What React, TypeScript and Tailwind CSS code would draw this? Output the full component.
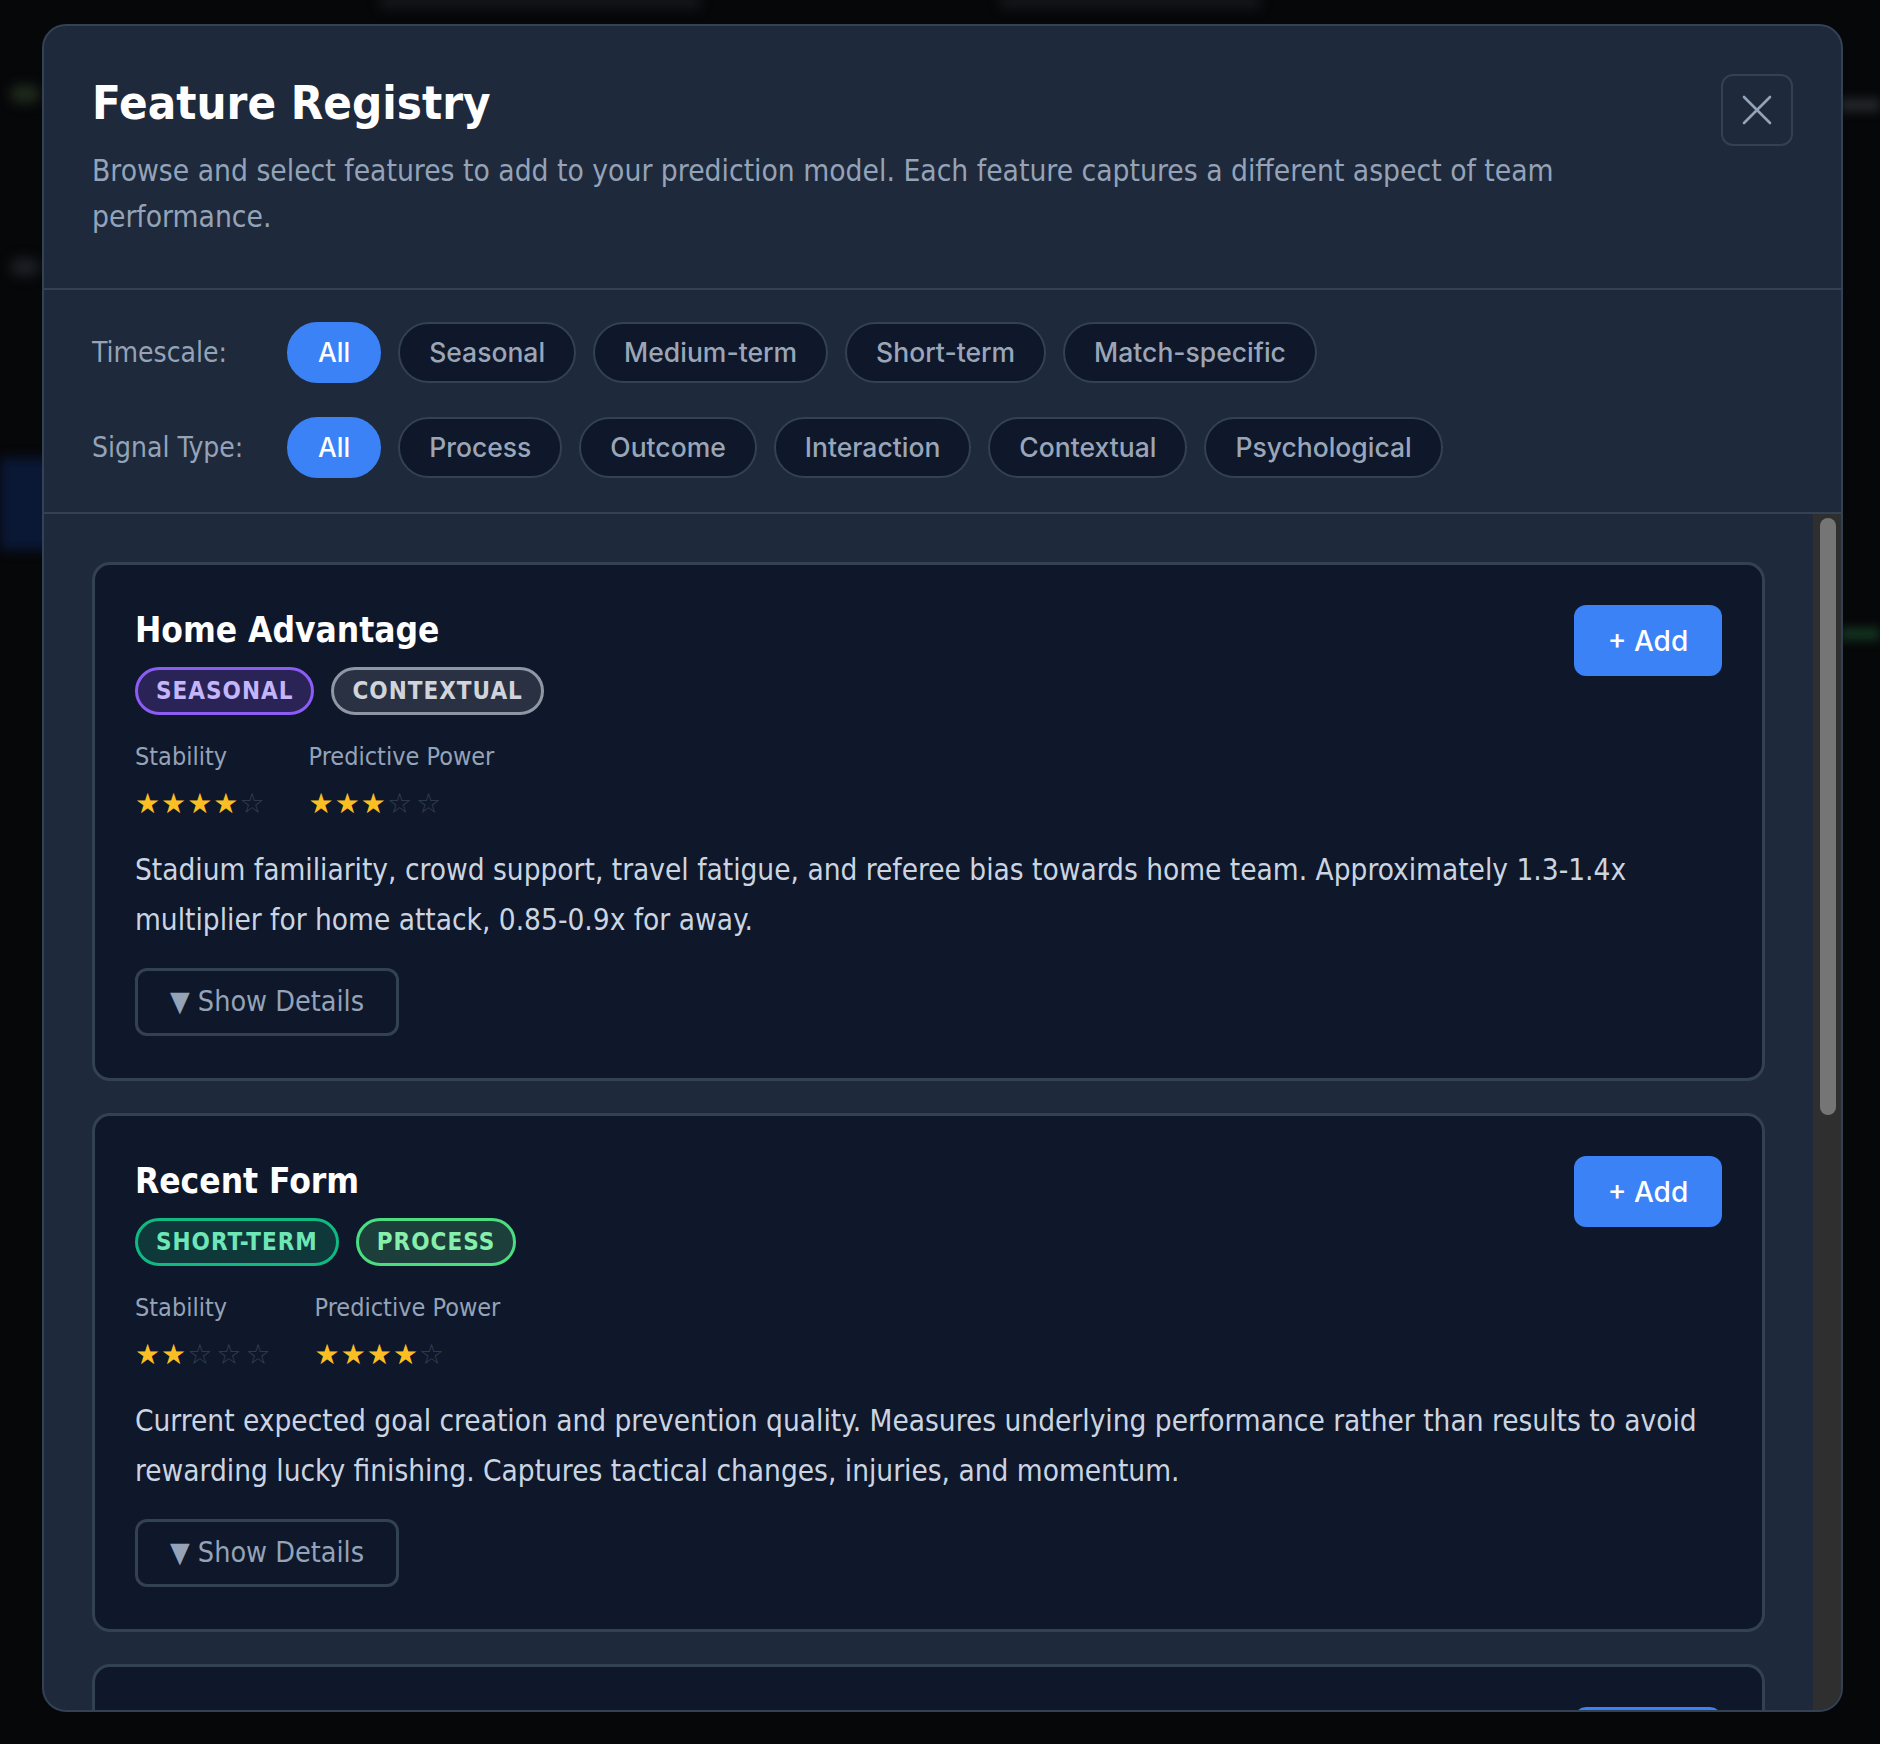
const body = "font-['DejaVu_Sans_Condensed','Liberation_Sans',sans-serif]";
const ui = "font-['Inter','Liberation_Sans',sans-serif]";

type Badge = { label: string; tone: string };

type Feature = {
  name: string;
  badges: Badge[];
  stability: number;
  power: number;
  description: string;
};

const tones: Record<string, string> = {
  violet: 'bg-[#2a2456] border-[#8b5cf6] text-[#c4b5fd]',
  gray: 'bg-[#2a3142] border-[#8f97a5] text-[#d1d5db]',
  teal: 'bg-[#0f383b] border-[#10b981] text-[#6ee7b7]',
  green: 'bg-[#1c3f3b] border-[#4ade80] text-[#86efac]',
};

const features: Feature[] = [
  {
    name: 'Home Advantage',
    badges: [
      { label: 'SEASONAL', tone: 'violet' },
      { label: 'CONTEXTUAL', tone: 'gray' },
    ],
    stability: 4,
    power: 3,
    description:
      'Stadium familiarity, crowd support, travel fatigue, and referee bias towards home team. Approximately 1.3-1.4x multiplier for home attack, 0.85-0.9x for away.',
  },
  {
    name: 'Recent Form',
    badges: [
      { label: 'SHORT-TERM', tone: 'teal' },
      { label: 'PROCESS', tone: 'green' },
    ],
    stability: 2,
    power: 4,
    description:
      'Current expected goal creation and prevention quality. Measures underlying performance rather than results to avoid rewarding lucky finishing. Captures tactical changes, injuries, and momentum.',
  },
  {
    name: 'Fixture Congestion',
    badges: [
      { label: 'MATCH-SPECIFIC', tone: 'gray' },
      { label: 'CONTEXTUAL', tone: 'gray' },
    ],
    stability: 3,
    power: 2,
    description:
      'Days of rest since the previous match and number of games played in the last fortnight. Tired squads concede more late goals.',
  },
];

const timescales = ['All', 'Seasonal', 'Medium-term', 'Short-term', 'Match-specific'];
const signalTypes = ['All', 'Process', 'Outcome', 'Interaction', 'Contextual', 'Psychological'];

function Stars({ value }: { value: number }) {
  return (
    <div className="font-['DejaVu_Sans',sans-serif] text-[28px] leading-[34px] whitespace-nowrap">
      {[0, 1, 2, 3, 4].map((i) =>
        i < value ? (
          <span key={i} className="text-[#fbbf24] tracking-[1px]">★</span>
        ) : (
          <span key={i} className="text-[#334155] tracking-[4px]">☆</span>
        )
      )}
    </div>
  );
}

function FilterRow({ label, options }: { label: string; options: string[] }) {
  return (
    <div className="flex items-center">
      <span className={`${body} w-[195px] shrink-0 text-[28px] text-[#94a3b8]`}>{label}</span>
      <div className="flex gap-[17px]">
        {options.map((opt, i) => (
          <button
            key={opt}
            className={`${ui} h-[61px] px-[29px] rounded-full border-2 text-[26.5px] font-medium leading-none ${
              i === 0
                ? 'bg-[#3b82f6] border-[#3b82f6] text-white'
                : 'bg-[#0f172a] border-[#334155] text-[#9aa6b8]'
            }`}
          >
            {opt}
          </button>
        ))}
      </div>
    </div>
  );
}

function FeatureCard({ f }: { f: Feature }) {
  return (
    <div className="shrink-0 rounded-[18px] border-[3px] border-[#334155] bg-[#0f172a] px-[40px] pt-[40px] pb-[42px]">
      <div className="flex items-start justify-between">
        <div>
          <h3 className={`${body} pt-[4px] text-[35px] leading-[43px] font-bold text-white mb-[15px]`}>{f.name}</h3>
          <div className="flex gap-[17px]">
            {f.badges.map((b) => (
              <span
                key={b.label}
                className={`${body} ${tones[b.tone]} h-[48px] px-[18px] flex items-center rounded-full border-[3px] text-[24px] font-bold tracking-[1px]`}
              >
                {b.label}
              </span>
            ))}
          </div>
        </div>
        <button className={`${ui} w-[148px] h-[71px] rounded-[12px] bg-[#3b82f6] text-white text-[28px] font-medium`}>
          + Add
        </button>
      </div>

      <div className={`${body} flex gap-[40px] mt-[26px]`}>
        <div>
          <div className="text-[25px] leading-[31px] text-[#94a3b8] mb-[15px]">Stability</div>
          <Stars value={f.stability} />
        </div>
        <div>
          <div className="text-[25px] leading-[31px] text-[#94a3b8] mb-[15px]">Predictive Power</div>
          <Stars value={f.power} />
        </div>
      </div>

      <p className={`${body} mt-[24px] text-[29.5px] leading-[50px] text-[#cbd5e1]`}>{f.description}</p>

      <button
        className={`${body} mt-[23px] h-[68px] px-[32px] rounded-[12px] border-[3px] border-[#334155] text-[28.5px] text-[#94a3b8]`}
      >
        ▼ Show Details
      </button>
    </div>
  );
}

export default function App() {
  return (
    <div className="relative w-full h-[1744px] overflow-hidden bg-[#060709]">
      {/* dimmed app behind the overlay */}
      <div className="absolute left-0 top-[458px] w-[55px] h-[92px] bg-[#0a1836] blur-[6px]" />
      <div className="absolute left-[10px] top-[85px] w-[30px] h-[18px] rounded-full bg-[#1f2a1c] blur-[6px]" />
      <div className="absolute left-[10px] top-[258px] w-[30px] h-[18px] rounded-full bg-[#1c1f24] blur-[6px]" />
      <div className="absolute right-0 top-[627px] w-[40px] h-[14px] bg-[#12301e] blur-[5px]" />
      <div className="absolute right-0 top-[98px] w-[40px] h-[14px] bg-[#222428] blur-[5px]" />
      <div className="absolute left-[380px] top-[-6px] w-[320px] h-[14px] bg-[#15171b] blur-[6px]" />
      <div className="absolute left-[1000px] top-[-6px] w-[260px] h-[14px] bg-[#15171b] blur-[6px]" />

      <div className="relative ml-[42px] mt-[24px] w-[1801px] h-[1688px] flex flex-col overflow-hidden rounded-[24px] border-2 border-[#334155] bg-[#1e293b]">
        {/* header */}
        <div className="flex items-start justify-between gap-[24px] px-[48px] pt-[48px] pb-[48px] border-b-2 border-[#334155]">
          <div>
            <h2 className={`${body} text-[47px] leading-[58px] font-bold text-white`}>Feature Registry</h2>
            <p className={`${body} mt-[16px] text-[29.7px] leading-[46px] text-[#94a3b8]`}>
              Browse and select features to add to your prediction model. Each feature captures a different aspect of team performance.
            </p>
          </div>
          <button className="shrink-0 w-[72px] h-[72px] flex items-center justify-center rounded-[12px] border-2 border-[#334155] text-[#94a3b8]">
            <svg width="30" height="30" viewBox="0 0 30 30" fill="none" stroke="currentColor" strokeWidth="2.6" strokeLinecap="round">
              <path d="M2 2 L28 28 M28 2 L2 28" />
            </svg>
          </button>
        </div>

        {/* filters */}
        <div className="flex flex-col gap-[34px] px-[48px] pt-[32px] pb-[34px] border-b-2 border-[#334155]">
          <FilterRow label="Timescale:" options={timescales} />
          <FilterRow label="Signal Type:" options={signalTypes} />
        </div>

        {/* feature list */}
        <div className="flex flex-1 min-h-0">
          <div className="flex-1 flex flex-col gap-[32px] p-[48px] overflow-hidden">
            {features.map((f) => (
              <FeatureCard key={f.name} f={f} />
            ))}
          </div>
          <div className="w-[28px] bg-[#2f2f2f] pt-[4px] pl-[7px]">
            <div className="w-[16px] h-[597px] rounded-full bg-[#757575]" />
          </div>
        </div>
      </div>
    </div>
  );
}
